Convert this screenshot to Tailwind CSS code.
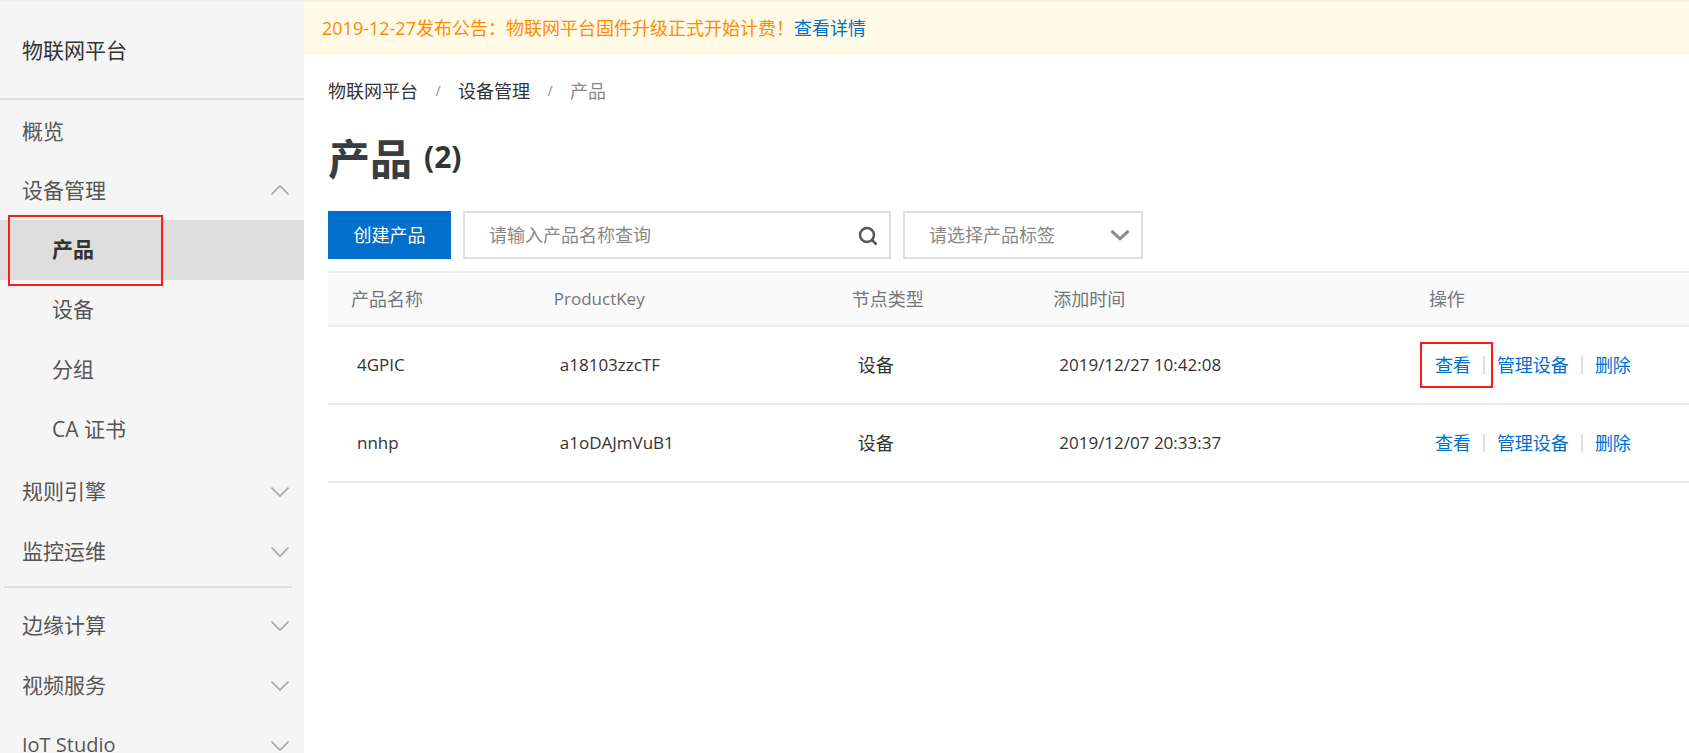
<!DOCTYPE html>
<html lang="zh-CN">
<head>
<meta charset="utf-8">
<meta name="viewport" content="width=device-width, initial-scale=1">
<title>物联网平台 - 产品</title>
<script src="https://cdn.jsdelivr.net/npm/@tailwindcss/browser@4"></script>
</head>
<body class="flex h-screen overflow-hidden bg-white font-['Open_Sans','Noto_Sans_CJK_SC',sans-serif] text-[18px] leading-6 text-[#333]">
  <svg class="hidden" aria-hidden="true">
    <symbol id="down" viewBox="0 0 18 12"><path d="M.5 1.5 9 10 17.5 1.5" fill="none" stroke="currentColor" stroke-width="1.6"/></symbol>
  </svg>

  <aside class="flex w-[304px] shrink-0 flex-col overflow-hidden border-t-2 border-[#ececec] bg-[#f5f5f5] text-[21px] leading-8 text-[#555]">
    <h2 class="flex h-[98px] shrink-0 items-center border-b-2 border-[#dedede] pl-[22px] text-[#333]">物联网平台</h2>
    <nav class="flex flex-col">
      <a href="#" class="flex h-[60px] items-center pl-[22px] pt-0.5">概览</a>
      <button type="button" class="flex h-[60px] items-center justify-between pl-[22px] pr-[15px]"><span>设备管理</span>
        <svg class="h-3 w-[18px] rotate-180 text-[#aaa]"><use href="#down"/></svg></button>
      <div class="flex flex-col">
        <a href="#" aria-current="page" class="relative flex h-[60px] items-center bg-[#dedede] pb-0.5 pl-[52px] font-bold text-[#333]">产品
          <span class="absolute -top-[5px] left-2 h-[71px] w-[155px] border-2 border-[#ff1a1a]"></span></a>
        <a href="#" class="flex h-[60px] items-center pb-0.5 pl-[52px]">设备</a>
        <a href="#" class="flex h-[60px] items-center pb-0.5 pl-[52px]">分组</a>
        <a href="#" class="flex h-[60px] items-center pb-0.5 pl-[52px]">CA 证书</a>
      </div>
      <button type="button" class="flex h-[60px] items-center justify-between pl-[22px] pr-[15px] pt-1"><span class="pb-0.5">规则引擎</span>
        <svg class="h-3 w-[18px] text-[#aaa]"><use href="#down"/></svg></button>
      <button type="button" class="flex h-[60px] items-center justify-between pl-[22px] pr-[15px] pt-1"><span class="pb-0.5">监控运维</span>
        <svg class="h-3 w-[18px] text-[#aaa]"><use href="#down"/></svg></button>
      <hr class="mb-2 ml-1 mr-3 mt-[6px] border-t-2 border-[#dedede]">
      <button type="button" class="flex h-[60px] items-center justify-between pl-[22px] pr-[15px]"><span class="pb-0.5">边缘计算</span>
        <svg class="h-3 w-[18px] text-[#aaa]"><use href="#down"/></svg></button>
      <button type="button" class="flex h-[60px] items-center justify-between pl-[22px] pr-[15px]"><span class="pb-0.5">视频服务</span>
        <svg class="h-3 w-[18px] text-[#aaa]"><use href="#down"/></svg></button>
      <button type="button" class="flex h-[60px] items-center justify-between pl-[22px] pr-[15px]"><span class="pb-0.5 text-xl leading-8">IoT Studio</span>
        <svg class="h-3 w-[18px] text-[#aaa]"><use href="#down"/></svg></button>
    </nav>
  </aside>

  <main class="min-w-0 flex-1">
    <p class="flex h-[55px] items-center border-t-2 border-[#f3f1e0] bg-[#fffbe6] pb-0.5 pl-[18px] text-[#ff8a00]">2019-12-27发布公告：物联网平台固件升级正式开始计费！<a href="#" class="text-[#0070cc]">查看详情</a></p>

    <div class="pl-6 pt-6">
      <nav aria-label="面包屑" class="flex items-center">
        <a href="#">物联网平台</a>
        <span class="w-10 text-center text-sm text-[#888]">/</span>
        <a href="#">设备管理</a>
        <span class="w-10 text-center text-sm text-[#888]">/</span>
        <span class="text-[#888]">产品</span>
      </nav>

      <h1 class="mt-7 flex h-14 items-center gap-3 text-[42px] font-bold leading-[56px] text-[#373d41]">产品 <span class="pb-1 text-[30px] text-[#333]">(2)</span></h1>

      <form class="mt-6 flex gap-3">
        <button type="button" class="h-12 w-[123px] bg-[#0070cc] text-white">创建产品</button>
        <div class="relative w-[428px]">
          <input type="text" aria-label="产品名称" placeholder="请输入产品名称查询" class="h-12 w-full border-2 border-[#dedede] pl-6 pr-12 outline-none placeholder:text-[#888]">
          <button type="button" aria-label="搜索" class="absolute right-[13px] top-[15px]">
            <svg class="size-5 text-[#555]" viewBox="0 0 20 20" fill="none" stroke="currentColor" stroke-width="2.5"><circle cx="9" cy="9" r="7"/><path d="m13.500 13.500 5 5"/></svg>
          </button>
        </div>
        <div class="relative w-60">
          <select aria-label="产品标签" class="h-12 w-full appearance-none border-2 border-[#dedede] bg-white pl-6 text-[#888] outline-none"><option>请选择产品标签</option></select>
          <svg class="pointer-events-none absolute right-[13px] top-[18px] h-3 w-5 text-[#888]" viewBox="0 0 20 12"><path d="m1.500 1.800 8.500 8 8.500-8" fill="none" stroke="currentColor" stroke-width="3"/></svg>
        </div>
      </form>

      <table class="mt-3 w-full table-fixed text-left">
        <thead>
          <tr class="h-[54px] border-y-2 border-[#ebebeb] bg-[#fafafa] text-[#73777a]">
            <th class="w-[14.9%] pl-[23px] font-normal">产品名称</th>
            <th class="w-[21.9%] pl-[23px] text-[17px] font-normal">ProductKey</th>
            <th class="w-[14.8%] pl-[23px] font-normal">节点类型</th>
            <th class="w-[27.6%] pl-[23px] font-normal">添加时间</th>
            <th class="pl-[23px] font-normal">操作</th>
          </tr>
        </thead>
        <tbody>
          <tr class="h-[78px] border-b-2 border-[#ebebeb]">
            <td class="pl-[29px] text-[17px]">4GPIC</td>
            <td class="pl-[29px] text-[17px]">a18103zzcTF</td>
            <td class="pl-[29px]">设备</td>
            <td class="pl-[29px] text-[17px]">2019/12/27 10:42:08</td>
            <td class="pl-[29px]">
              <div class="flex items-center text-[#0070cc]">
                <a href="#" class="relative">查看<span class="absolute -left-[15px] -top-[11px] h-[46px] w-[73px] border-2 border-[#ff1a1a]"></span></a>
                <span class="mx-3 h-[18px] w-[2px] bg-[#dedede]"></span>
                <a href="#">管理设备</a>
                <span class="mx-3 h-[18px] w-[2px] bg-[#dedede]"></span>
                <a href="#">删除</a>
              </div>
            </td>
          </tr>
          <tr class="h-[78px] border-b-2 border-[#ebebeb]">
            <td class="pl-[29px] text-[17px]">nnhp</td>
            <td class="pl-[29px] text-[17px]">a1oDAJmVuB1</td>
            <td class="pl-[29px]">设备</td>
            <td class="pl-[29px] text-[17px]">2019/12/07 20:33:37</td>
            <td class="pl-[29px]">
              <div class="flex items-center text-[#0070cc]">
                <a href="#">查看</a>
                <span class="mx-3 h-[18px] w-[2px] bg-[#dedede]"></span>
                <a href="#">管理设备</a>
                <span class="mx-3 h-[18px] w-[2px] bg-[#dedede]"></span>
                <a href="#">删除</a>
              </div>
            </td>
          </tr>
        </tbody>
      </table>
    </div>
  </main>
</body>
</html>
